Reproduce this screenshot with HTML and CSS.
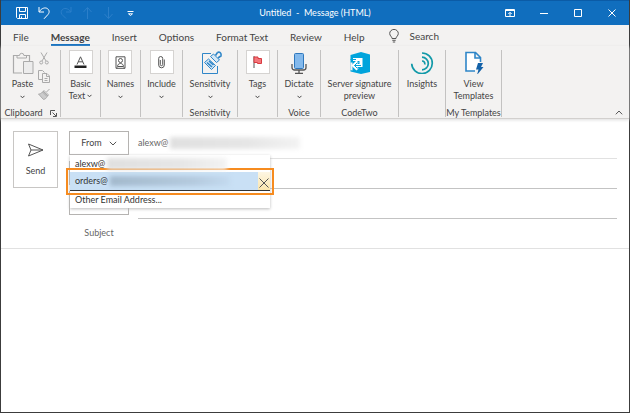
FILE: index.html
```html
<!DOCTYPE html>
<html lang="en">
<head>
    <meta charset="UTF-8">
    <meta name="viewport" content="width=device-width, initial-scale=1.0">
    <title>Untitled - Message (HTML)</title>
    <link rel="stylesheet" href="styles.css">
</head>
<body>
<div class="window">
    <header class="titlebar">
        <div class="quick-access">
            <button aria-label="Save">
                <svg width="14" height="14" viewBox="0 0 14 14"><path d="M1.500 1.500h11v11h-10l-1-1zM4.500 1.500v4h6v-4M4.500 12.500v-4h6v4M6.500 12.500v-2"/></svg>
            </button>
            <button aria-label="Undo">
                <svg width="14" height="14" viewBox="0 0 14 14"><path d="M2 1v5h5M2.300 5.700C4.500 2 8.500 1 10.700 2.800c2 1.800 1.800 4.200 0 6L7 12.800"/></svg>
            </button>
            <button class="dim" aria-label="Redo">
                <svg width="14" height="14" viewBox="0 0 14 14"><path d="M12 1v5H7M11.700 5.700C9 2 5 1.500 3 4c-1.500 2-1 4 1 5.500L7 12.500"/></svg>
            </button>
            <button class="dim" aria-label="Previous item">
                <svg width="14" height="14" viewBox="0 0 14 14"><path d="M6.500 13V2M2.500 6l4-4.500 4 4.500"/></svg>
            </button>
            <button class="dim" aria-label="Next item">
                <svg width="14" height="14" viewBox="0 0 14 14"><path d="M5.500 1v11.500M1.500 8l4 4.500 4-4.500"/></svg>
            </button>
            <button aria-label="Customize toolbar">
                <svg width="14" height="14" viewBox="0 0 14 14"><path d="M2.500 5.500h6M3.500 7.800h4l-2 1.700z"/></svg>
            </button>
        </div>
        <h1 class="title">Untitled&nbsp; -&nbsp; Message (HTML)</h1>
        <div class="window-controls">
            <button aria-label="Ribbon display options">
                <svg width="10" height="8" viewBox="0 0 10 8"><path d="M.5.5h9v7h-9zM.5 1.500h9M5 7V3.500M3.300 5L5 3.300 6.700 5"/></svg>
            </button>
            <button aria-label="Minimize">
                <svg width="8" height="8" viewBox="0 0 8 8"><path d="M0 4.500h8"/></svg>
            </button>
            <button aria-label="Maximize">
                <svg width="8" height="8" viewBox="0 0 8 8"><path d="M.5.5h7v7h-7z"/></svg>
            </button>
            <button aria-label="Close">
                <svg width="8" height="8" viewBox="0 0 8 8"><path d="M.5.5l7 7M7.500.5l-7 7"/></svg>
            </button>
        </div>
    </header>

    <nav class="tabs">
        <button class="tab">File</button>
        <button class="tab active">Message</button>
        <button class="tab">Insert</button>
        <button class="tab">Options</button>
        <button class="tab">Format Text</button>
        <button class="tab">Review</button>
        <button class="tab">Help</button>
        <button class="tab search">
            <svg width="10" height="14" viewBox="0 0 10 14"><path d="M3 9.500C3 7.500.7 7 .7 4.500a4.200 4 0 0 1 8.600 0C9.300 7 7 7.500 7 9.500zM3.300 11.300h3.400M3.800 13h2.400"/></svg>
            <span>Search</span>
        </button>
    </nav>

    <div class="ribbon">
        <section class="group clipboard">
            <div class="group-tools">
                <button class="tool">
                    <svg width="22" height="24" viewBox="0 0 22 24" class="grey"><path d="M10 23H1.500V5.500h4M14 5.500h3.500V11" stroke-width="1.200"/><path d="M5 8V5.500h2.500a2.200 2.200 0 0 1 4.400 0H14.500V8z"/><path d="M11.500 11.500h9.500v12h-9.500z" fill="#ececec"/></svg>
                    <span>Paste</span>
                    <svg class="chevron" width="5" height="4" viewBox="0 0 5 4"><path d="M.5.8l2 2 2-2"/></svg>
                </button>
                <div class="clip-tools">
                    <button aria-label="Cut">
                        <svg width="12" height="13" viewBox="0 0 12 13" class="grey"><path d="M3 .5l5 8.500M9 .5L4 9"/><circle cx="3.200" cy="10.500" r="1.500"/><circle cx="8.800" cy="10.500" r="1.500"/></svg>
                    </button>
                    <button aria-label="Copy">
                        <svg width="12" height="13" viewBox="0 0 12 13" class="grey"><path d="M4.500 9.500h-4v-9h4l2 2"/><path d="M4.500 3.500h4.500l2.500 2.500v6.500h-7zM8.500 3.500v3h3M6.500 8.500h3M6.500 10.500h3"/></svg>
                    </button>
                    <button aria-label="Format painter">
                        <svg width="12" height="13" viewBox="0 0 12 13" class="grey"><path d="M11.500 1L8.500 4M5 3l5 5M6 2.500l4.500 4.500-1.500 1.500L4.500 4z"/><path d="M4.500 4C3.500 5.500 2 6 .5 6l5 5.500C7.500 11 8.500 10 9 8.500z" fill="#ccc"/></svg>
                    </button>
                </div>
            </div>
            <h2 class="group-name">Clipboard
                <svg width="7" height="7" viewBox="0 0 7 7"><path d="M.5 5V.5H5M2.500 2.500l3.500 3.500M6.500 3v3.500H3"/></svg>
            </h2>
        </section>
        <section class="group narrow">
            <button class="tool">
                <span class="frame"><svg width="13" height="13" viewBox="0 0 13 13"><path d="M3 8.500L6.500.8 10 8.500M4.200 5.800h4.600"/><path d="M.5 9.500h12v2.500H.5z" class="black"/></svg></span>
                <span>Basic<br>Text <svg class="chevron" width="5" height="4" viewBox="0 0 5 4"><path d="M.5.8l2 2 2-2"/></svg></span>
            </button>
        </section>
        <section class="group narrow">
            <button class="tool">
                <span class="frame"><svg width="11" height="13" viewBox="0 0 11 13"><path d="M1 .8h9v11.500H1z"/><circle cx="5.500" cy="4.500" r="2"/><path d="M2.500 10.500c0-4 6-4 6 0zM2 12.300v-1M9 12.300v-1"/></svg></span>
                <span>Names</span>
                <svg class="chevron" width="5" height="4" viewBox="0 0 5 4"><path d="M.5.8l2 2 2-2"/></svg>
            </button>
        </section>
        <section class="group include">
            <button class="tool">
                <span class="frame"><svg width="7" height="13" viewBox="0 0 7 13"><path d="M2.300 4v4.500a1.200 1.200 0 0 0 2.400 0V2.500a2 2 0 0 0-4 0V9a2.800 2.800 0 0 0 5.600 0V3.500"/></svg></span>
                <span>Include</span>
                <svg class="chevron" width="5" height="4" viewBox="0 0 5 4"><path d="M.5.8l2 2 2-2"/></svg>
            </button>
        </section>
        <section class="group sensitivity">
            <button class="tool">
                <svg width="24" height="24" viewBox="0 0 24 24"><path d="M13 3.500H4.500v20H19.500v-7.500" class="blue"/><path d="M6.500 12.500l4-3.500 7 6.500-4 4z" fill="#d4e8f7" class="blue"/><path d="M9 12.500l5 4.500M11 11l4.500 4" class="blue" stroke-width="1.600"/><path d="M12.500 6.500l3-2.500 6 6-3 2.500z" fill="#d4e8f7" class="blue"/><path d="M17.500 5.500L19.500 2.500M20 8l3.500-2.500M19.500 2.500c2-1 4 .5 3.500 3" class="blue" stroke-width="1.600"/></svg>
                <span>Sensitivity</span>
                <svg class="chevron" width="5" height="4" viewBox="0 0 5 4"><path d="M.5.8l2 2 2-2"/></svg>
            </button>
            <h2 class="group-name">Sensitivity</h2>
        </section>
        <section class="group narrow">
            <button class="tool">
                <span class="frame"><svg width="9" height="13" viewBox="0 0 9 13"><path d="M1 0v12"/><path d="M1 1h4v1.500h3.500v5H4.500V6.500H1z" fill="#f4767b" stroke="#d83b41"/></svg></span>
                <span>Tags</span>
                <svg class="chevron" width="5" height="4" viewBox="0 0 5 4"><path d="M.5.8l2 2 2-2"/></svg>
            </button>
        </section>
        <section class="group voice">
            <button class="tool">
                <svg width="16" height="24" viewBox="0 0 16 24"><path d="M1 14v3.500a2.500 2.500 0 0 0 2.500 2.500h9a2.500 2.500 0 0 0 2.500-2.500V14M8 20v3M4 23.400h8" stroke-width="1.300"/><rect x="3.500" y="3.500" width="9" height="15" rx="1" fill="#83b9ec" stroke="#2f78bd"/></svg>
                <span>Dictate</span>
                <svg class="chevron" width="5" height="4" viewBox="0 0 5 4"><path d="M.5.8l2 2 2-2"/></svg>
            </button>
            <h2 class="group-name">Voice</h2>
        </section>
        <section class="group codetwo">
            <button class="tool">
                <svg width="22" height="24" viewBox="0 0 22 24"><path d="M1.500 5L12 2l9 2.500v17.500l-9 2-10.500-2.500z" fill="#00a4dc" stroke="none"/><path d="M1.500 12.500h2V20.500l-2-.5z" fill="#f3f2f1" stroke="none"/><path d="M4 9.500h8v6H5M8.500 11.500l-4 4 4 4" stroke="#fff" stroke-width="3"/><path d="M1.500 9.500H7M12 15.500H5.500M8.500 12.500l-3 3 3 3" stroke="#00a4dc" stroke-width="1"/></svg>
                <span>Server signature<br>preview</span>
            </button>
            <h2 class="group-name">CodeTwo</h2>
        </section>
        <section class="group insights">
            <button class="tool">
                <svg width="24" height="24" viewBox="0 0 24 24"><g stroke="#1199a8" stroke-width="1.700"><path d="M12 3a10.300 10.300 0 1 1-10.300 10.800"/><path d="M12 7.200a6.300 6.300 0 0 1 0 12.600"/><path d="M12 11a2.700 2.700 0 0 1 2.700 3.500"/></g></svg>
                <span>Insights</span>
            </button>
        </section>
        <section class="group templates">
            <button class="tool">
                <svg width="20" height="24" viewBox="0 0 20 24"><path d="M11 21H2V2.500h9.500l5 5V12M11 2.500V8h5.500" class="blue" fill="#fff" stroke-width="1.600"/><path d="M14 13h5l-2 4h2.500L13 25l1.500-5.500H12z" fill="#1462a8" stroke="none"/></svg>
                <span>View<br>Templates</span>
            </button>
            <h2 class="group-name">My Templates</h2>
        </section>
        <button class="collapse" aria-label="Collapse ribbon">
            <svg width="8" height="5" viewBox="0 0 8 5"><path d="M.8 4.300L4 1l3.200 3.300"/></svg>
        </button>
    </div>

    <form class="compose">
        <button type="button" class="send">
            <svg width="18" height="14" viewBox="0 0 18 14"><path d="M1.500 1L16 7 1.500 13 4 7zM4 7h12"/></svg>
            <span>Send</span>
        </button>
        <div class="fields">
            <div class="row">
                <div class="from">
                    <button type="button" class="field-button">From
                        <svg width="8" height="5" viewBox="0 0 8 5"><path d="M.8.8L4 4 7.200.8"/></svg>
                    </button>
                    <div class="menu">
                        <button type="button" class="menu-item">alexw@<span class="redacted"></span></button>
                        <div class="menu-selected">
                            <button type="button" class="menu-item">orders@<span class="redacted"></span></button>
                            <button type="button" class="remove" aria-label="Remove address">
                                <svg width="10" height="10" viewBox="0 0 10 10"><path d="M.5.5l9 9M9.500.5l-9 9"/></svg>
                            </button>
                        </div>
                        <button type="button" class="menu-item">Other Email Address...</button>
                    </div>
                </div>
                <div class="field light">alexw@<span class="redacted"></span></div>
            </div>
            <div class="row">
                <button type="button" class="field-button" aria-label="To"></button>
                <input type="text" class="field" aria-label="To recipients">
            </div>
            <div class="row">
                <button type="button" class="field-button" aria-label="Cc"></button>
                <input type="text" class="field" aria-label="Cc recipients">
            </div>
            <div class="row">
                <label class="subject-label" for="subject">Subject</label>
                <input type="text" class="field plain" id="subject">
            </div>
        </div>
    </form>
    <textarea class="message" aria-label="Message body"></textarea>
</div>
</body>
</html>
```
FILE: styles.css
```css
* {
    box-sizing: border-box;
}

body {
    margin: 0;
    font-family: Lato, "Open Sans", sans-serif;
    font-size: 9px;
    line-height: 12px;
    color: #444;
    background: #fff;
}

button,
input,
textarea {
    margin: 0;
    padding: 0;
    border: none;
    background: none;
    font: inherit;
    color: inherit;
}

svg {
    flex: none;
    fill: none;
    stroke: #555;
}

h1,
h2 {
    margin: 0;
    font-size: 9px;
    font-weight: normal;
}

.window {
    display: flex;
    flex-direction: column;
    min-height: 100vh;
    border: 1px solid #3c3c3c;
    border-top: none;
}

/* Title bar */
.titlebar {
    display: grid;
    grid-template-columns: 1fr auto 1fr;
    align-items: center;
    height: 25px;
    border-top: 1px solid #0b5ba6;
    background: #106ebe;
    color: #fff;
}

.titlebar svg {
    display: block;
    margin: auto;
    stroke: #fff;
}

.quick-access {
    display: flex;
    padding-left: 10px;
}

.quick-access button {
    width: 22px;
}

.quick-access .dim svg {
    stroke: #2b7fca;
}

.window-controls {
    display: flex;
    justify-content: flex-end;
}

.window-controls button {
    width: 34px;
    height: 24px;
}

/* Tabs */
.tabs {
    display: flex;
    gap: 22px;
    padding: 3px 12px 0;
    background: #f3f2f1;
    font-size: 10px;
    line-height: 18px;
}

.tab {
    height: 18px;
    border-bottom: 2px solid transparent;
}

.tab.active {
    border-color: #106ebe;
    font-weight: bold;
}

.search {
    display: flex;
    align-items: center;
    gap: 11px;
    padding-left: 2px;
}

/* Ribbon */
.ribbon {
    display: flex;
    padding: 4px 0 1px;
    border-bottom: 1px solid #d2d0ce;
    background: #f3f2f1;
    box-shadow: 0 1px 3px #ddd;
}

.group {
    display: flex;
    flex: none;
    flex-direction: column;
    align-items: center;
    justify-content: space-between;
    height: 67px;
    border-right: 1px solid #c3c2c1;
}

.clipboard { width: 60px; }
.narrow { width: 40px; }
.include { width: 42px; }
.sensitivity { width: 55px; }
.voice { width: 43px; }
.codetwo { width: 78px; }
.insights { width: 47px; }
.templates { width: 56px; }

.group-tools {
    display: flex;
    gap: 4px;
}

.tool {
    display: flex;
    flex-direction: column;
    align-items: center;
    gap: 4px;
    white-space: nowrap;
}

.tool .chevron {
    margin: 1px 0;
}

.chevron {
    stroke: #444;
}

.frame {
    display: flex;
    align-items: center;
    justify-content: center;
    width: 24px;
    height: 24px;
    border: 1px solid #d5d3d1;
    background: #fff;
}

.clip-tools {
    display: flex;
    flex-direction: column;
    gap: 5px;
    padding-top: 2px;
}

.clip-tools svg {
    display: block;
}

.grey {
    stroke: #aaa;
}

.blue {
    stroke: #2f86c8;
}

.black {
    fill: #222;
    stroke: none;
}

.group-name {
    display: flex;
    align-items: center;
    gap: 7px;
    white-space: nowrap;
    line-height: 8px;
}

.collapse {
    align-self: flex-end;
    margin-left: auto;
    padding: 0 6px 2px;
}

.collapse svg {
    display: block;
}

/* Message header */
.compose {
    display: flex;
    gap: 11px;
    padding: 12px 12px 0;
    border-bottom: 1px solid #e1e1e1;
    color: #666;
}

.send {
    display: flex;
    flex-direction: column;
    align-items: center;
    justify-content: center;
    gap: 8px;
    width: 45px;
    height: 57px;
    border: 1px solid #c8c6c4;
    color: #444;
}

.fields {
    display: flex;
    flex: 1;
    flex-direction: column;
    gap: 2px;
}

.row {
    display: flex;
    gap: 9px;
    height: 28px;
}

.row:last-child {
    height: 27px;
}

.from {
    position: relative;
}

.field-button {
    display: flex;
    align-items: center;
    justify-content: center;
    gap: 7px;
    width: 60px;
    height: 24px;
    border: 1px solid #b5b3b1;
    color: #444;
}

.field {
    display: flex;
    flex: 1;
    align-items: center;
    min-width: 0;
    padding-bottom: 3px;
    border-bottom: 1px solid #c3c3c3;
}

.light {
    border-color: #e1e1e1;
}

.plain {
    border-color: transparent;
}

.subject-label {
    width: 60px;
    line-height: 24px;
    text-align: center;
}

.redacted {
    width: 120px;
    height: 12px;
    margin-left: 2px;
    background: linear-gradient(90deg, #e0e0e0, #e6e6e6 60%, #f3f3f3);
    filter: blur(2px);
}

.field .redacted {
    width: 130px;
}

/* From address menu */
.menu {
    position: absolute;
    z-index: 1;
    top: 24px;
    left: 1px;
    width: 200px;
    background: #fff;
    box-shadow: 0 1px 3px #bbb;
    color: #333;
}

.menu-item {
    display: flex;
    align-items: center;
    width: 100%;
    height: 17px;
    padding-left: 5px;
}

.menu-selected {
    display: flex;
    height: 19px;
    border-bottom: 1px solid #333;
    background: #c9e0f5;
    outline: 2px solid #f68b1f;
    outline-offset: 2px;
}

.menu-selected .redacted {
    height: 10px;
    background: linear-gradient(90deg, #a3b9cc, #b4cade 70%, #c3daef);
}

.remove {
    display: flex;
    flex: none;
    align-items: flex-end;
    justify-content: center;
    width: 12px;
    padding-bottom: 2px;
    background: linear-gradient(#fdf6e3, #fbe6ae);
}

/* Message body */
.message {
    flex: 1;
    padding: 12px;
    resize: none;
    outline: none;
}
```
